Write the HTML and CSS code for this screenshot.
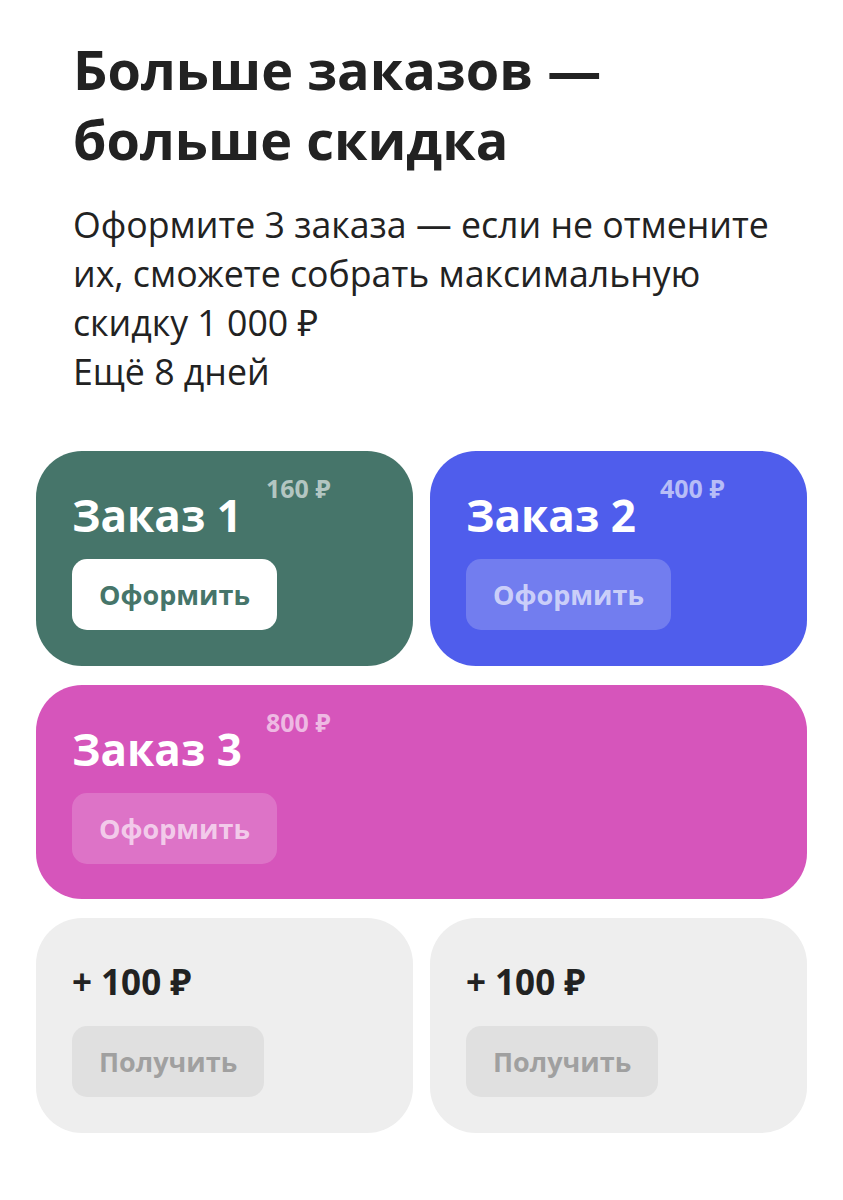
FILE: index.html
```html
<!DOCTYPE html>
<html lang="ru">
<head>
<meta charset="utf-8">
<title>Больше заказов — больше скидка</title>
<link rel="stylesheet" href="styles.css">
</head>
<body>
<main class="promo">
  <header class="promo-head">
    <h1 class="promo-title">Больше заказов —<br>больше скидка</h1>
    <p class="promo-text">Оформите 3 заказа — если не отмените их, сможете собрать максимальную скидку 1&nbsp;000&nbsp;₽<br>Ещё 8 дней</p>
  </header>

  <section class="orders">
    <div class="card card-green">
      <div class="card-title">Заказ 1</div>
      <span class="card-price">160 ₽</span>
      <button class="btn btn-white">Оформить</button>
    </div>
    <div class="card card-blue">
      <div class="card-title">Заказ 2</div>
      <span class="card-price">400 ₽</span>
      <button class="btn btn-soft">Оформить</button>
    </div>
    <div class="card card-pink card-wide">
      <div class="card-title">Заказ 3</div>
      <span class="card-price">800 ₽</span>
      <button class="btn btn-soft btn-pink">Оформить</button>
    </div>
    <div class="card card-grey">
      <div class="card-title card-bonus">+ 100 ₽</div>
      <button class="btn btn-grey">Получить</button>
    </div>
    <div class="card card-grey">
      <div class="card-title card-bonus">+ 100 ₽</div>
      <button class="btn btn-grey">Получить</button>
    </div>
  </section>
</main>
</body>
</html>
```

FILE: styles.css
```css
* {
  box-sizing: border-box;
}

html, body {
  margin: 0;
  background: #ffffff;
}

body {
  font-family: "Open Sans", "Noto Sans", sans-serif;
  color: #222222;
}

.promo {
  width: 843px;
  padding: 34px 36px 0;
}

.promo-head {
  padding: 0 37px;
}

.promo-title {
  margin: 0;
  font-size: 54px;
  line-height: 70px;
  font-weight: 700;
  color: #222222;
}

.promo-text {
  margin: 26px 0 0;
  font-size: 35.7px;
  line-height: 49px;
  font-weight: 400;
  color: #222222;
}

.orders {
  margin-top: 55px;
  display: grid;
  grid-template-columns: 1fr 1fr;
  column-gap: 17px;
  row-gap: 19px;
}

.card {
  position: relative;
  height: 215px;
  padding: 38px 36px 0;
  border-radius: 46px;
  display: flex;
  flex-direction: column;
  align-items: flex-start;
  color: #ffffff;
}

.card-wide {
  grid-column: 1 / span 2;
  height: 214px;
}

.card-green { background: #46756a; }
.card-blue  { background: #4f5dec; }
.card-pink  { background: #d655bb; }
.card-grey  { background: #eeeeee; color: #222222; }

.card-title {
  font-size: 44px;
  line-height: 52px;
  font-weight: 700;
}

.card-bonus {
  font-size: 35px;
}

.card-price {
  position: absolute;
  top: 25px;
  left: 230px;
  font-size: 25px;
  line-height: 25px;
  font-weight: 700;
  color: rgba(255, 255, 255, 0.6);
}

.btn {
  margin-top: 18px;
  height: 71px;
  padding: 0 27px;
  border: 0;
  border-radius: 15px;
  font-family: inherit;
  font-size: 27px;
  font-weight: 700;
  display: inline-flex;
  align-items: center;
  justify-content: center;
}

.btn-white {
  background: #ffffff;
  color: #46756a;
}

.btn-soft {
  background: rgba(255, 255, 255, 0.2);
  color: rgba(255, 255, 255, 0.65);
}

.btn-pink {
  background: rgba(255, 255, 255, 0.18);
}

.btn-grey {
  background: #e0e0e0;
  color: #a0a0a0;
  padding: 0 27px;
}
```
